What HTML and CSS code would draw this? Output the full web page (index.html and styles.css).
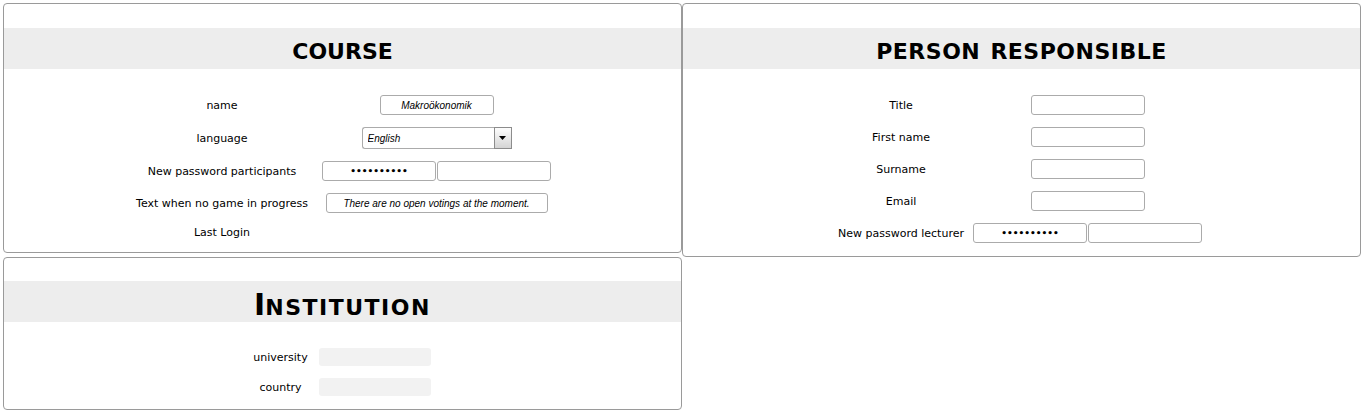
FILE: index.html
```html
<!DOCTYPE html>
<html lang="en">
<head>
<meta charset="utf-8">
<title>Course settings</title>
<link rel="stylesheet" href="styles.css">
</head>
<body>
<div class="page">
  <div class="col">
    <section class="box">
      <h2 class="box-title">COURSE</h2>
      <table class="form form-course">
        <tr>
          <td class="lbl">name</td>
          <td class="val"><input class="field" type="text" value="Makroökonomik"></td>
        </tr>
        <tr>
          <td class="lbl">language</td>
          <td class="val">
            <div class="select">
              <select class="select-input"><option>English</option></select>
              <span class="select-btn"><svg width="7" height="4" viewBox="0 0 7 4"><polygon points="0,0 7,0 3.5,4" fill="#000"/></svg></span>
            </div>
          </td>
        </tr>
        <tr>
          <td class="lbl">New password participants</td>
          <td class="val">
            <div class="pair">
              <input class="field field-pw" type="password" value="abcdefghij">
              <input class="field field-pw" type="password" value="">
            </div>
          </td>
        </tr>
        <tr>
          <td class="lbl">Text when no game in progress</td>
          <td class="val"><input class="field field-wide" type="text" value="There are no open votings at the moment."></td>
        </tr>
        <tr>
          <td class="lbl">Last Login</td>
          <td class="val"></td>
        </tr>
      </table>
    </section>
    <section class="box box-inst">
      <h2 class="box-title">I<span class="title-sc">nstitution</span></h2>
      <table class="form form-inst">
        <tr>
          <td class="lbl">university</td>
          <td class="val"><input class="field field-soft" type="text" value=""></td>
        </tr>
        <tr>
          <td class="lbl">country</td>
          <td class="val"><input class="field field-soft" type="text" value=""></td>
        </tr>
      </table>
    </section>
  </div>
  <section class="box">
    <h2 class="box-title box-title-wide">PERSON RESPONSIBLE</h2>
    <table class="form form-person">
      <tr>
        <td class="lbl">Title</td>
        <td class="val"><input class="field" type="text" value=""></td>
      </tr>
      <tr>
        <td class="lbl">First name</td>
        <td class="val"><input class="field" type="text" value=""></td>
      </tr>
      <tr>
        <td class="lbl">Surname</td>
        <td class="val"><input class="field" type="text" value=""></td>
      </tr>
      <tr>
        <td class="lbl">Email</td>
        <td class="val"><input class="field" type="text" value=""></td>
      </tr>
      <tr>
        <td class="lbl">New password lecturer</td>
        <td class="val">
          <div class="pair">
            <input class="field field-pw" type="password" value="abcdefghij">
            <input class="field field-pw" type="password" value="">
          </div>
        </td>
      </tr>
    </table>
  </section>
</div>
</body>
</html>
```
FILE: styles.css
```css
body {
  margin: 3px;
  font-family: "DejaVu Sans", Verdana, sans-serif;
  font-size: 11px;
  color: #000;
  background: #fff;
}

.page {
  display: flex;
  align-items: flex-start;
}

.col {
  display: flex;
  flex-direction: column;
  gap: 4px;
}

.box {
  width: 679px;
  box-sizing: border-box;
  border: 1px solid #9a9a9a;
  border-radius: 4px;
  padding: 24px 0 7px;
  background: #fff;
}

.box-inst {
  padding-top: 23px;
}

.box-title {
  margin: 0;
  height: 41px;
  box-sizing: border-box;
  padding-top: 6px;
  line-height: 35px;
  background: #ededed;
  text-align: center;
  font-size: 22px;
  font-weight: bold;
}

.box-inst .box-title {
  font-size: 30px;
}

.title-sc {
  font-size: 22px;
  text-transform: uppercase;
  letter-spacing: 1.5px;
}

.box-title-wide {
  letter-spacing: 0.5px;
  word-spacing: 2px;
}

.form {
  margin: 20px auto 0;
  border-collapse: collapse;
}

.form td {
  padding: 6px;
  text-align: center;
  vertical-align: middle;
}

.form .lbl {
  padding: 7px 6px 5px;
  line-height: 14px;
  white-space: nowrap;
}

.form-course .lbl {
  width: 176px;
}

.form-person .lbl {
  width: 126px;
  padding-left: 3px;
  padding-right: 3px;
}

.form-inst .lbl {
  width: 52px;
  padding-left: 5px;
  padding-right: 5px;
}

.field {
  display: block;
  margin: 0 auto;
  width: 114px;
  height: 20px;
  box-sizing: border-box;
  border: 1px solid #ababab;
  border-radius: 3px;
  padding: 0 4px;
  background: #fff;
  color: #000;
  font: italic 10px "Liberation Sans", Arial, sans-serif;
  text-align: center;
  outline: none;
}

.field-wide {
  width: 222px;
}

.field-pw {
  margin: 0;
  font: bold 9px "DejaVu Sans", Verdana, sans-serif;
}

.field-soft {
  width: 112px;
  height: 18px;
  border: 0;
  background: #f2f2f2;
}

.pair {
  display: flex;
  justify-content: center;
  gap: 1px;
}

.select {
  display: flex;
  width: 150px;
  height: 22px;
  margin: 0 auto;
  box-sizing: border-box;
  border: 1px solid #ababab;
  border-right: 0;
  border-radius: 3px 0 0 3px;
}

.select-input {
  flex: 1;
  min-width: 0;
  appearance: none;
  -webkit-appearance: none;
  border: 0;
  background: transparent;
  padding: 0 0 0 5px;
  margin: 0;
  font: italic 10px "Liberation Sans", Arial, sans-serif;
  color: #000;
  outline: none;
}

.select-btn {
  width: 18px;
  height: 22px;
  margin-top: -1px;
  box-sizing: border-box;
  border: 1px solid #8c8c8c;
  background: linear-gradient(#fdfdfd, #d4d4d4);
  display: flex;
  align-items: center;
  justify-content: center;
}
```
